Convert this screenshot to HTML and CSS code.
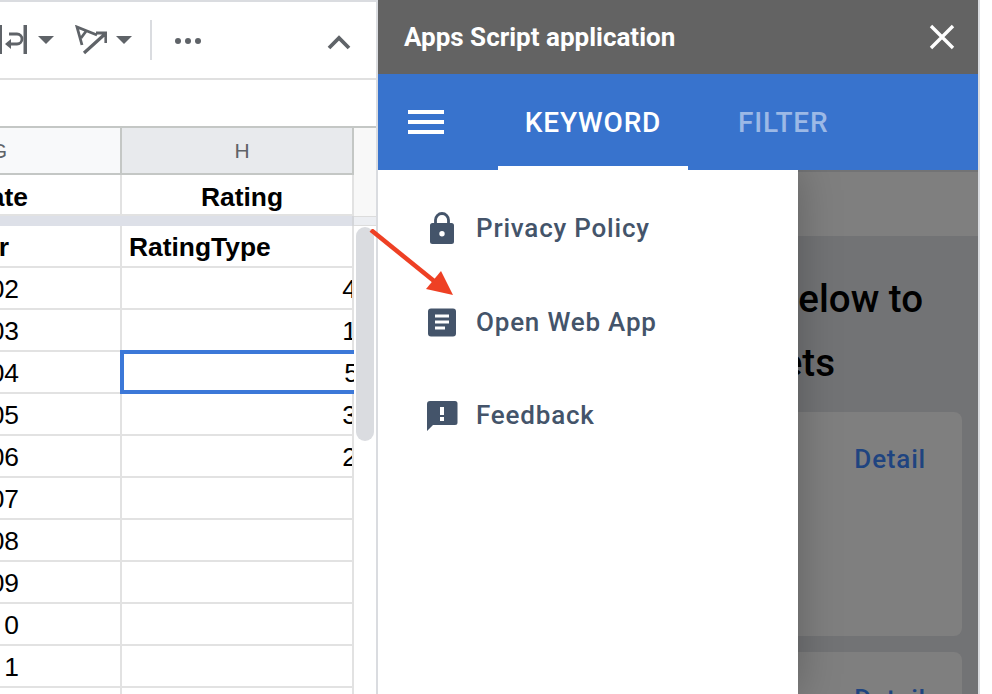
FILE: index.html
```html
<!DOCTYPE html>
<html>
<head lang="en">
    <meta charset="UTF-8">
    <title>Apps Script application</title>
    <link rel="stylesheet" href="styles.css">
</head>
<body>
<div class="sheet">
    <div class="toolbar">
        <svg class="tool-wrap" width="27" height="30" viewBox="0 0 27 30">
            <path d="M0 0h2v29H0zM23.500 0H27v29h-3.500z" fill="#5f6368"/>
            <path d="M9 9h8a5 5 0 0 1 0 10h-7" fill="none" stroke="#5f6368" stroke-width="2.800"/>
            <path d="M11 14v10l-6-5z" fill="#5f6368"/>
        </svg>
        <span class="caret caret-first"></span>
        <svg class="tool-rotate" width="32" height="30" viewBox="0 0 32 30">
            <path d="M9 28L30 9M21 8h10v10" fill="none" stroke="#5f6368" stroke-width="3.200"/>
            <path d="M7 20L2 2l20 8M6 13l6-8" fill="none" stroke="#5f6368" stroke-width="2.800"/>
        </svg>
        <span class="caret caret-second"></span>
        <span class="tool-sep"></span>
        <span class="tool-dots"><i></i><i></i><i></i></span>
        <svg class="tool-chevron" width="24" height="16" viewBox="0 0 24 16">
            <path d="M2 14L12 4l10 10" fill="none" stroke="#5f6368" stroke-width="3.800"/>
        </svg>
    </div>
    <div class="formula-bar"></div>
    <div class="sheet-body">
        <div class="grid">
            <div class="head head-g"><span>G</span></div>
            <div class="head head-h">H</div>

            <div class="cell bold right-clip date-end top-row"><span>Date</span></div>
            <div class="cell bold center top-row">Rating</div>
            <div class="band"></div>

            <div class="cell bold right-clip year-end"><span>Year</span></div>
            <div class="cell bold">RatingType</div>

            <div class="cell right-clip"><span>2002</span></div>
            <div class="cell num"><span>4</span></div>
            <div class="cell right-clip"><span>2003</span></div>
            <div class="cell num"><span>1</span></div>
            <div class="cell right-clip"><span>2004</span></div>
            <div class="cell num selected"><span>5</span></div>
            <div class="cell right-clip"><span>2005</span></div>
            <div class="cell num"><span>3</span></div>
            <div class="cell right-clip"><span>2006</span></div>
            <div class="cell num"><span>2</span></div>
            <div class="cell right-clip"><span>2007</span></div>
            <div class="cell"></div>
            <div class="cell right-clip"><span>2008</span></div>
            <div class="cell"></div>
            <div class="cell right-clip"><span>2009</span></div>
            <div class="cell"></div>
            <div class="cell right-clip"><span>0</span></div>
            <div class="cell"></div>
            <div class="cell right-clip"><span>1</span></div>
            <div class="cell"></div>
            <div class="cell"></div>
            <div class="cell"></div>
        </div>
        <div class="vscroll">
            <div class="vscroll-top"></div>
            <div class="vscroll-band"></div>
            <div class="vscroll-thumb"></div>
        </div>
    </div>
</div>

<div class="panel">
    <div class="panel-title">
        <span>Apps Script application</span>
        <svg width="26" height="26" viewBox="0 0 26 26">
            <path d="M2 2l22 22M24 2L2 24" fill="none" stroke="#fff" stroke-width="3.400"/>
        </svg>
    </div>
    <div class="appbar">
        <div class="burger"><i></i><i></i><i></i></div>
        <div class="tab tab-active">KEYWORD</div>
        <div class="tab tab-off">FILTER</div>
    </div>
    <div class="panel-main">
        <div class="page-band"></div>
        <div class="page-heading">
            <div class="heading-one">Pick from below to</div>
            <div class="heading-two">your sheets</div>
        </div>
        <div class="page-card"><span>Detail</span></div>
        <div class="page-card"><span>Detail</span></div>

        <div class="drawer">
            <div class="drawer-item">
                <svg width="32" height="36" viewBox="0 0 32 36">
                    <path d="M9.500 14V10a6.500 6.500 0 0 1 13 0v4" fill="none" stroke="#44546a" stroke-width="2.800"/>
                    <path fill-rule="evenodd" d="M6.500 13h19a2.500 2.500 0 0 1 2.500 2.500v16a2.500 2.500 0 0 1-2.500 2.500h-19A2.500 2.500 0 0 1 4 31.500v-16A2.500 2.500 0 0 1 6.500 13zM16 21a2.700 2.700 0 1 0 0 5.400 2.700 2.700 0 0 0 0-5.400z" fill="#44546a"/>
                </svg>
                <span>Privacy Policy</span>
            </div>
            <div class="drawer-item">
                <svg width="32" height="36" viewBox="0 0 32 36">
                    <path fill-rule="evenodd" d="M5 4.500h22a3 3 0 0 1 3 3v22a3 3 0 0 1-3 3H5a3 3 0 0 1-3-3v-22a3 3 0 0 1 3-3zm4 6v3h14v-3zm0 6v3h14v-3zm0 6v3h10v-3z" fill="#44546a"/>
                </svg>
                <span>Open Web App</span>
            </div>
            <div class="drawer-item">
                <svg width="32" height="36" viewBox="0 0 32 36">
                    <path fill-rule="evenodd" d="M4 4h25a2.500 2.500 0 0 1 2.500 2.500v19a2.500 2.500 0 0 1-2.500 2.500H7l-6 6V7a3 3 0 0 1 3-3zm10 6v8h4v-8zm0 10v4h4v-4z" fill="#44546a"/>
                </svg>
                <span>Feedback</span>
            </div>
        </div>
    </div>
</div>
<div class="gutter"></div>

<svg class="callout" width="90" height="72" viewBox="0 0 90 72">
    <path d="M2 1L65 52" fill="none" stroke="#ee4024" stroke-width="4.500"/>
    <path d="M84 66L57 60 72 42z" fill="#ee4024"/>
</svg>
</body>
</html>
```

FILE: styles.css
```css
* {
    margin: 0;
    padding: 0;
    box-sizing: border-box;
}

html, body {
    height: 694px;
    overflow: hidden;
}

body {
    display: flex;
    background: #fff;
    font-family: "Liberation Sans", Arial, sans-serif;
    color: #000;
}

/* left side, the spreadsheet */
.sheet {
    width: 378px;
    height: 694px;
    flex: none;
    overflow: hidden;
    border-right: 2px solid #dadce0;
    border-top: 2px solid #dadce0;
}

.toolbar {
    height: 78px;
    display: flex;
    align-items: center;
    border-bottom: 2px solid #e0e0e0;
}

.tool-wrap {
    flex: none;
}

.caret {
    width: 0;
    height: 0;
    border-left: 8.5px solid transparent;
    border-right: 8.5px solid transparent;
    border-top: 8px solid #5f6368;
    flex: none;
}

.caret-first {
    margin-left: 11px;
}

.tool-rotate {
    margin-left: 21px;
    flex: none;
}

.caret-second {
    margin-left: 9px;
}

.tool-sep {
    width: 2px;
    height: 40px;
    background: #dadce0;
    margin-left: 18px;
    flex: none;
}

.tool-dots {
    display: flex;
    gap: 4px;
    margin: 1px 0 0 23px;
}

.tool-dots i {
    width: 6px;
    height: 6px;
    border-radius: 50%;
    background: #5f6368;
}

.tool-chevron {
    margin: 3px 0 0 126px;
    flex: none;
}

.formula-bar {
    height: 48px;
    border-bottom: 2px solid #c4c7c5;
}

.sheet-body {
    display: flex;
}

.grid {
    width: 354px;
    flex: none;
    display: grid;
    grid-template-columns: 122px 232px;
    grid-template-rows: 47px 41px 10px repeat(12, 42px);
}

.head {
    display: flex;
    align-items: center;
    justify-content: center;
    font-size: 21px;
    color: #5f6368;
    border-right: 2px solid #c4c7c5;
    border-bottom: 2px solid #c4c7c5;
    overflow: hidden;
}

.head-g {
    background: #f8f9fa;
    justify-content: flex-end;
    padding-right: 113px;
}

.head-h {
    background: #e8eaed;
    padding-left: 10px;
}

.cell {
    display: flex;
    align-items: center;
    font-size: 26.4px;
    padding: 2px 0 0 7px;
    border-right: 2px solid #e2e2e2;
    border-bottom: 2px solid #e2e2e2;
    overflow: hidden;
    white-space: nowrap;
}

.bold {
    font-weight: bold;
}

.center {
    justify-content: center;
    padding-left: 10px;
}

.top-row {
    padding-top: 5px;
}

.right-clip {
    justify-content: flex-end;
    padding-right: 101px;
}

.date-end {
    padding-right: 92px;
}

.year-end {
    padding-right: 111px;
}

.right-clip span {
    flex: none;
}

.num {
    justify-content: flex-end;
}

.num span {
    margin-right: -5px;
}

.selected {
    margin: -2px 0 0 -2px;
    box-shadow: inset 0 4px #3c78d8, inset 0 -4px #3c78d8, inset 4px 0 #3c78d8;
    border: none;
    position: relative;
}

.band {
    grid-column: 1 / 3;
    background: #dde0e8;
    border-right: 2px solid #d4d6da;
}

.vscroll {
    width: 22px;
    flex: none;
}

.vscroll-top {
    height: 88px;
    background: #f8f8f8;
}

.vscroll-band {
    height: 10px;
    background: #eceef2;
    border-top: 1px solid #dcdcdc;
    border-bottom: 1px solid #dcdcdc;
}

.vscroll-thumb {
    width: 18px;
    height: 214px;
    margin: 1px 0 0 2px;
    background: #dadce0;
    border-radius: 9px;
}

/* right side, the add-on panel */
.panel {
    width: 600px;
    height: 694px;
    flex: none;
    display: flex;
    flex-direction: column;
    font-family: Roboto, "Liberation Sans", sans-serif;
}

.panel-title {
    height: 74px;
    flex: none;
    background: #636363;
    color: #fff;
    font-size: 26px;
    font-weight: 700;
    display: flex;
    align-items: center;
    justify-content: space-between;
    padding: 0 23px 0 26px;
}

.appbar {
    height: 96px;
    flex: none;
    background: #3873cd;
    display: flex;
    align-items: center;
    position: relative;
    z-index: 2;
}

.burger {
    width: 36px;
    margin-left: 30px;
    display: flex;
    flex-direction: column;
    gap: 6px;
}

.burger i {
    height: 4px;
    background: #fff;
}

.tab {
    font-size: 28px;
    font-weight: 500;
    letter-spacing: 0.8px;
    height: 96px;
    line-height: 98px;
    text-align: center;
}

.tab-active {
    width: 190px;
    margin-left: 54px;
    color: #fff;
    border-bottom: 4px solid #fff;
}

.tab-off {
    margin-left: 50px;
    color: #9cb9e6;
}

.panel-main {
    flex: 1;
    position: relative;
    overflow: hidden;
    background: #727375;
}

.page-band {
    height: 64px;
    margin-top: 2px;
    background: #7f7f7f;
}

.page-heading {
    font-size: 38.5px;
    font-weight: 500;
    line-height: 64px;
    color: #000;
    white-space: nowrap;
    text-align: right;
    margin-top: 31px;
}

.heading-one {
    padding-right: 55px;
}

.heading-two {
    padding-right: 143px;
}

.page-card {
    height: 224px;
    width: 584px;
    margin-top: 17px;
    background: #7f7f7f;
    border-radius: 8px;
    color: #1f4480;
    font-size: 26px;
    font-weight: 500;
    letter-spacing: 0.8px;
    text-align: right;
    padding: 32px 36px 0 0;
}

.page-card + .page-card {
    margin-top: 16px;
}

.drawer {
    position: absolute;
    left: 0;
    top: 0;
    bottom: 0;
    width: 420px;
    background: #fff;
    box-shadow: 0 0 40px rgba(0, 0, 0, 0.25);
    padding-top: 35px;
}

.drawer-item {
    height: 93.500px;
    display: flex;
    align-items: flex-start;
    padding-left: 48px;
    font-size: 26px;
    font-weight: 500;
    letter-spacing: 0.8px;
    color: #44546a;
}

.drawer-item span {
    margin-left: 18px;
    line-height: 46px;
}

.drawer-item svg {
    flex: none;
    margin-top: 5px;
}

.gutter {
    flex: 1;
    border-left: 2px solid #dadce0;
}

/* red annotation drawn over the screenshot */
.callout {
    position: absolute;
    left: 369px;
    top: 229px;
}
```
